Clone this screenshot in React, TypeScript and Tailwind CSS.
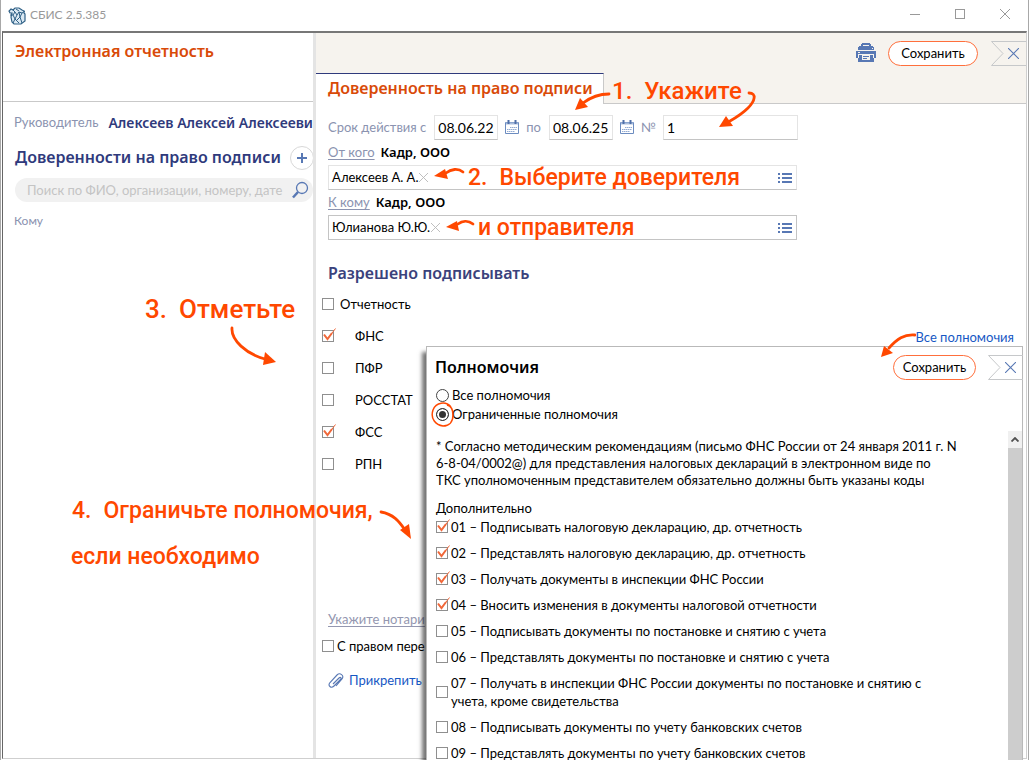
import { useState, type ReactNode } from 'react';

interface Permission {
  code: string;
  lines: string[];
  checked?: boolean;
}

const reports = [
  { label: 'ФНС', checked: true },
  { label: 'ПФР', checked: false },
  { label: 'РОССТАТ', checked: false },
  { label: 'ФСС', checked: true },
  { label: 'РПН', checked: false }
];

const permissions: Permission[] = [
  { code: '01', lines: ['Подписывать налоговую декларацию, др. отчетность'], checked: true },
  { code: '02', lines: ['Представлять налоговую декларацию, др. отчетность'], checked: true },
  { code: '03', lines: ['Получать документы в инспекции ФНС России'], checked: true },
  { code: '04', lines: ['Вносить изменения в документы налоговой отчетности'], checked: true },
  { code: '05', lines: ['Подписывать документы по постановке и снятию с учета'] },
  { code: '06', lines: ['Представлять документы по постановке и снятию с учета'] },
  { code: '07', lines: ['Получать в инспекции ФНС России документы по постановке и снятию с', 'учета, кроме свидетельства'] },
  { code: '08', lines: ['Подписывать документы по учету банковских счетов'] },
  { code: '09', lines: ['Представлять документы по учету банковских счетов'] }
];

function Logo() {
  return (
    <svg viewBox="0 0 18 18" className="size-[18px]" fill="none" stroke="#2f6086">
      <path d="M4 6H2L1 4l2-2 2 1 2-2h4l3 2 2 1v2l1 1v7l-4 3H6l-2-2-1-5z" fill="#dbe9f3" strokeWidth="1.200" />
      <path d="M2 8h3l2-3 2 3 2-3 3 1 3-2M5 8l2 4-2 4M9 8l-2 4 4 4M11 5l1 5-3 3M14 6l-2 4 2 6M5 3l2 2M8 2l3 2" />
    </svg>
  );
}

function PrinterIcon() {
  return (
    <svg viewBox="0 0 20 20" className="size-5" fill="#5878b4">
      <path d="M5 3V1h1V0h8v1h1v2h2v1h1v3H2V4h1V3zm2-1v1h6V2z" fillRule="evenodd" />
      <path d="M0 8h20v7h-2v-4H2v4H0z" />
      <path d="M3 12h14v3h1v4H2v-4h1zm3 0v5h8v-5z" fillRule="evenodd" />
      <path d="M7 13h6v1H7zM7 15h4v1H7z" />
      <path d="M2 9h2v1H2zM16 5h1v1h-1z" fill="#f6f3ee" />
    </svg>
  );
}

function CalendarIcon() {
  return (
    <svg viewBox="0 0 14 15" className="h-[15px] w-[14px] shrink-0" fill="none" stroke="#6c8cc0">
      <path d="M.5 2.500h13v11H.5z" fill="#fff" />
      <path d="M1 3.500h12" stroke="#a9bddd" strokeWidth="2" />
      <path d="M3.500 0v4M10.500 0v4" stroke="#4f6fa8" strokeWidth="2" />
      <path d="M5 7.500h7M2 9.500h10M2 11.500h8" stroke="#93abd3" strokeDasharray="1.500 .5" />
    </svg>
  );
}

function ListIcon() {
  return (
    <svg viewBox="0 0 14 10" className="h-[10px] w-[14px]" fill="#5878b4">
      <path d="M0 0h2v2H0zM4 0h10v2H4zM0 4h2v2H0zM4 4h10v2H4zM0 8h2v2H0zM4 8h10v2H4z" />
    </svg>
  );
}

function Cross({ className }: { className: string }) {
  return (
    <svg viewBox="0 0 10 10" className={className} fill="none" stroke="currentColor">
      <path d="m0 0 10 10M10 0 0 10" />
    </svg>
  );
}

function Checkbox({ id, defaultChecked }: { id: string; defaultChecked?: boolean }) {
  return (
    <span className="relative block size-3 shrink-0">
      <input id={id} type="checkbox" defaultChecked={defaultChecked} className="peer block size-3 appearance-none border border-[#8f8f8f] bg-white" />
      <svg viewBox="0 0 14 14" className="pointer-events-none absolute -top-[2px] left-0 hidden size-[14px] peer-checked:block" fill="none" stroke="#f0683a">
        <path d="m2 7 3.500 4L13.500.5" strokeWidth="1" />
        <path d="m2 6.500 3.500 4.500L10 5" strokeWidth="2" />
      </svg>
    </span>
  );
}

function SaveButton({ className }: { className: string }) {
  return (
    <button type="button" className={`h-[25px] rounded-full border border-[#ff6f3c] bg-white leading-none text-black ${className}`}>
      Сохранить
    </button>
  );
}

function CloseTag() {
  return (
    <button type="button" aria-label="Закрыть" className="relative h-[25px] w-[35px] text-[#5878b4]">
      <svg viewBox="0 0 35 25" className="absolute inset-0 h-[25px] w-[35px]" fill="none" stroke="#c6c8ca">
        <path d="M35 .5H.5l11.500 12-11.500 12H35" />
      </svg>
      <Cross className="absolute top-[7px] left-[17px] size-[11px]" />
    </button>
  );
}

function DateField({ id, label, value }: { id: string; label: string; value: string }) {
  return (
    <>
      <label htmlFor={id} className="pt-px text-[#8b93b0]">{label}</label>
      <input id={id} defaultValue={value} className="ml-2 h-[25px] w-16 border border-[#e4e4e4] border-b-[#c4c4c4] bg-white px-[3px] text-[14px] text-black" />
      <button type="button" aria-label="Календарь" className="mx-[7px]"><CalendarIcon /></button>
    </>
  );
}

function PersonField({ link, company, person, className }: { link: string; company: string; person: string; className: string }) {
  return (
    <div>
      <div className="flex h-[25px] items-center gap-[6px] pt-px">
        <a href="#" className="text-[#8b93b0] underline underline-offset-2">{link}</a>
        <b className="font-['Noto_Sans',sans-serif] text-[13px] font-semibold">{company}</b>
      </div>
      <div className={`flex h-[25px] items-center border bg-white pr-1 pl-[3px] ${className}`}>
        <span>{person}</span>
        <button type="button" aria-label="Удалить" className="ml-px text-[#b8b8b8]"><Cross className="size-[9px]" /></button>
        <button type="button" aria-label="Выбрать из списка" className="ml-auto"><ListIcon /></button>
      </div>
    </div>
  );
}

function Note({ className, children }: { className: string; children: ReactNode }) {
  return <p className={`absolute flex gap-3 font-['Roboto',sans-serif] leading-8 font-medium whitespace-nowrap text-[#ff4800] ${className}`}>{children}</p>;
}

// Curved hand-drawn pointers laid over the form.
function Arrow({ className, viewBox, line, head }: { className: string; viewBox: string; line: string; head: string }) {
  return (
    <svg viewBox={viewBox} className={`pointer-events-none absolute ${className}`} fill="none">
      <path d={line} stroke="#ff4800" strokeWidth="2.800" strokeLinecap="round" />
      <path d={head} fill="#ff4800" />
    </svg>
  );
}

function PermissionsDialog() {
  const [mode, setMode] = useState('limited');

  return (
    <section role="dialog" aria-labelledby="dialog-title" className="absolute top-[313px] right-[3px] -bottom-[10px] left-[110px] flex flex-col border border-[#b9b9b9] bg-white shadow-[-4px_6px_4px_rgba(0,0,0,0.55)]">
      <header className="-mr-px flex h-[40px] items-center">
        <h2 id="dialog-title" className="mr-auto pl-2 font-['Noto_Sans',sans-serif] text-[16px] font-semibold">Полномочия</h2>
        <SaveButton className="mr-3 w-[83px]" />
        <CloseTag />
      </header>
      <div className="-mt-px pl-[9px]">
        <label className="flex h-[19px] items-center gap-[3px]">
          <input type="radio" name="mode" checked={mode === 'all'} onChange={() => setMode('all')} className="size-[13px] appearance-none rounded-full border border-[#444] checked:border-[#333] checked:bg-[#333] checked:shadow-[inset_0_0_0_2px_#fff]" />
          Все полномочия
        </label>
        <label className="relative flex h-[19px] items-center gap-[3px]">
          <input type="radio" name="mode" checked={mode === 'limited'} onChange={() => setMode('limited')} className="size-[13px] appearance-none rounded-full border border-[#444] checked:border-[#333] checked:bg-[#333] checked:shadow-[inset_0_0_0_2px_#fff]" />
          Ограниченные полномочия
          <svg viewBox="0 0 24 26" className="pointer-events-none absolute -top-[4px] -left-[5px] h-[26px] w-6" fill="none" stroke="#ff4800" strokeWidth="1.500">
            <path d="M20 6C15 0 5 1 2 9c-3 9 3 15 10 16 6 0 10-4 10-11 0-5-2-9-6-10" />
          </svg>
        </label>
      </div>
      <div className="mt-[7px] flex min-h-0 flex-1 overflow-hidden">
        <div className="flex-1 pt-[7px] pl-[9px] whitespace-nowrap">
          <p className="leading-[17px]">
            * Согласно методическим рекомендациям (письмо ФНС России от 24 января 2011 г. N<br />
            6-8-04/0002@) для представления налоговых деклараций в электронном виде по<br />
            ТКС уполномоченным представителем обязательно должны быть указаны коды
          </p>
          <h3 className="mt-[11px] leading-[17px]">Дополнительно</h3>
          <ul className="-mt-[3px]">
            {permissions.map((item) => (
              <li key={item.code} className="flex items-center gap-[3px] py-1 leading-[18px]">
                <Checkbox id={`p${item.code}`} defaultChecked={item.checked} />
                <label htmlFor={`p${item.code}`}>
                  {item.code} – {item.lines[0]}
                  {item.lines[1] ? <span className="block">{item.lines[1]}</span> : null}
                </label>
              </li>
            ))}
          </ul>
        </div>
        <div className="flex w-[14px] flex-col bg-[#cdcdcd]">
          <button type="button" aria-label="Вверх" className="flex h-[17px] items-center justify-center bg-[#f0f0f0]">
            <svg viewBox="0 0 8 5" className="h-[5px] w-2" fill="none" stroke="#505050" strokeWidth="1.800"><path d="m.5 4.500 3.500-3.500 3.500 3.500" /></svg>
          </button>
        </div>
      </div>
    </section>
  );
}

export default function App() {
  return (
    <div className="relative flex h-screen flex-col overflow-hidden border-x border-[#a8a8a8] bg-white font-['Lato','Noto_Sans',sans-serif] text-[13px] text-black">
      <div className="flex h-[31px] shrink-0 items-center pl-[7px] text-[#999]">
        <Logo />
        <span className="ml-1 pb-[2px] text-xs">СБИС 2.5.385</span>
        <div className="mr-[18px] ml-auto flex items-center gap-[35px] pb-[3px]">
          <button type="button" aria-label="Свернуть" className="h-px w-[10px] bg-[#999]" />
          <button type="button" aria-label="Развернуть" className="size-[10px] border border-[#999]" />
          <button type="button" aria-label="Закрыть окно"><Cross className="size-[10px]" /></button>
        </div>
      </div>

      <div className="mr-px mb-px ml-px flex min-h-0 flex-1 border-t-2 border-r border-b border-l border-[#cfcfcf] border-t-[#777] border-l-[#666]">
        <aside className="w-[313px] shrink-0 overflow-hidden border-r-[3px] border-[#e4e4e4]">
          <header className="h-[69px] border-b border-[#c9c9c9] pt-[6px] pl-3">
            <h1 className="font-['Noto_Sans',sans-serif] text-[16px] leading-6 font-semibold text-[#d94a08]">Электронная отчетность</h1>
          </header>
          <div className="mt-[7px] flex h-[26px] items-center gap-[10px] pl-[11px] whitespace-nowrap">
            <span className="pt-[2px] text-[#8b93b0]">Руководитель</span>
            <b className="font-['Noto_Sans',sans-serif] text-[14px] font-semibold text-[#2f3a7c]">Алексеев Алексей Алексеевич</b>
          </div>
          <div className="mt-[8px] flex h-[30px] items-center pl-3 whitespace-nowrap">
            <h2 className="w-[275px] shrink-0 pb-[2px] font-['Noto_Sans',sans-serif] text-[16px] font-semibold text-[#2f3a7c]">Доверенности на право подписи</h2>
            <button type="button" aria-label="Добавить" className="flex size-6 shrink-0 items-center justify-center rounded-full border border-[#d8d8d8] text-[#5878b4]">
              <svg viewBox="0 0 10 10" className="size-[10px]" fill="none" stroke="currentColor" strokeWidth="2"><path d="M5 0v10M0 5h10" /></svg>
            </button>
          </div>
          <div className="mt-[5px] ml-3 flex h-6 items-center rounded-full bg-[#f1f1f1] pr-1 pl-3">
            <input aria-label="Поиск" placeholder="Поиск по ФИО, организации, номеру, дате" className="min-w-0 flex-1 bg-transparent pt-[2px] placeholder:text-[#c4c4c4]" />
            <svg viewBox="0 0 18 18" className="size-[18px]" fill="none" stroke="#5878b4">
              <circle cx="11" cy="7" r="5.500" strokeWidth="1.300" />
              <path d="m7 11-5 5.500" strokeWidth="2.500" />
            </svg>
          </div>
          <div className="mt-[10px] pl-[11px] text-[12px] leading-[18px] text-[#8b93b0]">Кому</div>
        </aside>

        <main className="relative min-w-0 flex-1">
          <div className="flex h-10 items-center justify-end bg-[#f6f3ee]">
            <button type="button" aria-label="Печать" className="mr-3"><PrinterIcon /></button>
            <SaveButton className="mr-[13px] w-[90px] text-[13px]" />
            <CloseTag />
          </div>
          <div className="flex h-[31px] bg-[#f6f3ee]">
            <h2 className="w-[288px] border-t border-r border-t-[#2f3a7c] border-r-[#c9c9c9] bg-white pl-3 font-['Noto_Sans',sans-serif] text-[16px] leading-7 font-semibold whitespace-nowrap text-[#d94a08]">Доверенность на право подписи</h2>
            <div className="flex-1 border-b border-[#c9c9c9]" />
          </div>

          <form className="px-3 pt-[11px]" onSubmit={(event) => event.preventDefault()}>
            <div className="flex items-center">
              <DateField id="from" label="Срок действия с" value="08.06.22" />
              <DateField id="to" label="по" value="08.06.25" />
              <label htmlFor="number" className="pt-px text-[#8b93b0]">№</label>
              <input id="number" defaultValue="1" className="ml-[7px] h-[25px] w-[135px] border border-[#e4e4e4] border-b-[#c4c4c4] px-[3px] text-[14px]" />
            </div>
            <div className="w-[469px]">
              <PersonField link="От кого" company="Кадр, ООО" person="Алексеев А. А." className="border-[#e4e4e4] border-b-[#c4c4c4]" />
              <PersonField link="К кому" company="Кадр, ООО" person="Юлианова Ю.Ю." className="border-[#c4c4c4]" />
            </div>

            <h3 className="mt-[21px] font-['Noto_Sans',sans-serif] text-[16px] leading-6 font-semibold text-[#3a427c]">Разрешено подписывать</h3>
            <div className="-ml-[6px]">
              <div className="mt-[3px] flex h-8 items-center gap-[6px]">
                <Checkbox id="reports" />
                <label htmlFor="reports" className="pt-[2px]">Отчетность</label>
              </div>
              {reports.map((item) => (
                <div key={item.label} className="flex h-8 items-center gap-[21px]">
                  <Checkbox id={item.label} defaultChecked={item.checked} />
                  <label htmlFor={item.label} className="pt-[2px]">{item.label}</label>
                </div>
              ))}
            </div>
            <a href="#" className="mt-[129px] block leading-5 text-[#9497b0] underline underline-offset-2">Укажите нотари</a>
            <div className="mt-[7px] -ml-[6px] flex h-5 items-center gap-[3px]">
              <Checkbox id="delegate" />
              <label htmlFor="delegate" className="pt-[2px]">С правом пере</label>
            </div>
            <a href="#" className="mt-[15px] flex h-5 items-center gap-[5px] text-[#1758c4]">
              <svg viewBox="0 0 16 16" className="size-4" fill="none" stroke="#5878b4" strokeWidth="1.100">
                <path d="m5 11 6-6c1.500-1.500 3 0 1.500 1.500L6 13c-3 3-6.500-.5-4-3.500L9 2c3-3 7.500.5 5 4l-6 7" />
              </svg>
              Прикрепить
            </a>
          </form>

          <a href="#" className="absolute top-[294px] right-3 leading-5 text-[#1758c4]">Все полномочия</a>
          <PermissionsDialog />
        </main>
      </div>

      <Note className="top-[75px] left-[611px] text-[24px]"><span>1.</span><span>Укажите</span></Note>
      <Arrow className="top-[90px] left-[570px] h-5 w-10" viewBox="0 0 40 20" line="M38 4C28 4 20 7 12 13" head="M4 20 9 8l8 9z" />
      <Arrow className="top-[88px] left-[716px] h-10 w-10" viewBox="0 0 40 40" line="M32 5c8 0 6 8-1 15-5 5-11 9-18 13" head="M2 39 9 28l7 10z" />
      <Note className="top-[162px] left-[467px] text-[23px]"><span>2.</span><span>Выберите доверителя</span></Note>
      <Arrow className="top-[166px] left-[432px] h-5 w-[32px]" viewBox="0 0 32 20" line="M30 6C25 2 18 3 13 7" head="M1 10 12 3l3 10z" />
      <Note className="top-[212px] left-[477px] text-[23px]">и отправителя</Note>
      <Arrow className="top-[216px] left-[444px] h-5 w-[32px]" viewBox="0 0 32 20" line="M28 8C23 4 17 5 13 8" head="M1 11 12 5l2 10z" />
      <Note className="top-[293px] left-[144px] text-[26px]"><span>3.</span><span>Отметьте</span></Note>
      <Arrow className="top-[325px] left-[228px] h-10 w-12" viewBox="0 0 48 40" line="M3 3C2 15 17 29 36 34" head="m36 27 11 10-13 3z" />
      <Note className="top-[495px] left-[71px] text-[23px]"><span>4.</span><span>Ограничьте полномочия,</span></Note>
      <Note className="top-[541px] left-[70px] text-[23px]">если необходимо</Note>
      <Arrow className="top-[508px] left-[375px] h-[32px] w-9" viewBox="0 0 36 32" line="M5 4c12 2 18 9 24 18" head="m24 22 9-6 2 15z" />
      <Arrow className="top-[333px] left-[879px] h-[26px] w-9" viewBox="0 0 36 26" line="M35 2C24 1 17 6 9 15" head="M1 24 4 13l9 7z" />
    </div>
  );
}
